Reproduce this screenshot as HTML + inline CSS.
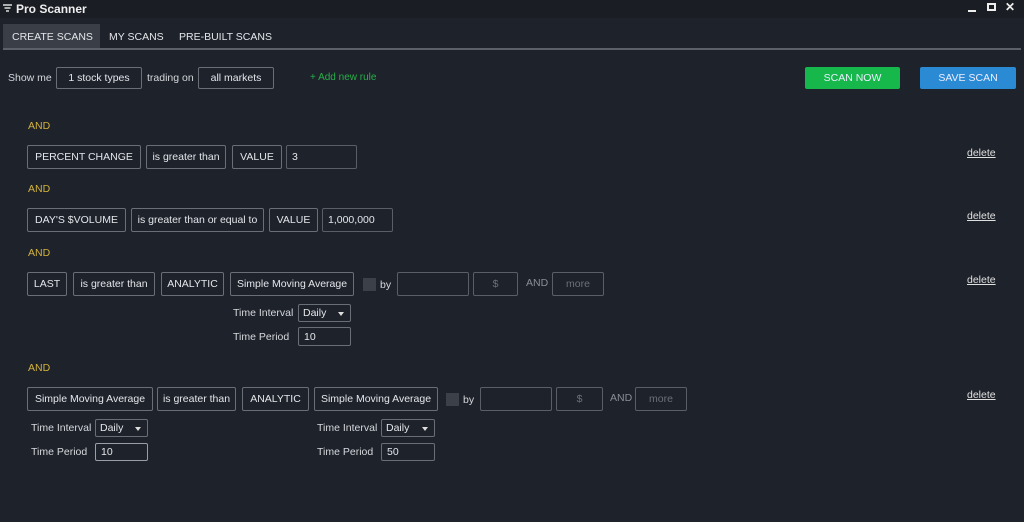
<!DOCTYPE html>
<html><head><style>
*{margin:0;padding:0;box-sizing:border-box}
body{width:1024px;height:522px;background:#1e222b;font-family:"Liberation Sans",sans-serif;font-size:10.5px;color:#d6d8dc;position:relative;overflow:hidden}
.a{position:absolute;white-space:nowrap}
.b{position:absolute;border:1px solid #6a6e76;border-radius:2px;display:flex;align-items:center;justify-content:center;color:#e4e6ea;font-size:10.5px;white-space:nowrap}
.i{position:absolute;border:1px solid #5a5e66;border-radius:2px;display:flex;align-items:center;padding-left:5px;color:#e4e6ea}
.g{color:#6c7078;justify-content:center;padding:0}
.and{position:absolute;color:#d4b23c;font-size:10.5px}
.del{position:absolute;left:967px;text-decoration:underline;color:#e0e0e0}
.sel{position:absolute;border:1px solid #6a6e76;border-radius:2px;padding-left:4px;display:flex;align-items:center;color:#e4e6ea}
.sel:after{content:"";position:absolute;right:6px;top:7px;border:3px solid transparent;border-top:4px solid #ddd}
.cb{position:absolute;width:13px;height:13px;background:#3c4049}
</style></head><body>
<div class="a" style="left:0;top:0;width:1024px;height:18px;background:#1a1d24"></div>
<svg class="a" style="left:3px;top:4px" width="9" height="9"><path d="M0 1h9M1.5 4h6M3 7h3" stroke="#ddd" stroke-width="1.6"/></svg>
<div class="a" style="left:16px;top:2px;font-weight:bold;font-size:12px;color:#eee">Pro Scanner</div>
<div class="a" style="left:968px;top:10px;width:8px;height:2px;background:#eee"></div>
<div class="a" style="left:987px;top:3px;width:9px;height:8px;border:2px solid #eee"></div>
<div class="a" style="left:1005px;top:0px;font-size:12px;font-weight:bold;color:#eee">✕</div>
<div class="a" style="left:3px;top:24px;width:97px;height:24px;background:#3a3e46"></div>
<div class="a" style="left:12px;top:31px;color:#e4e6ea">CREATE SCANS</div>
<div class="a" style="left:109px;top:31px;color:#e4e6ea">MY SCANS</div>
<div class="a" style="left:179px;top:31px;color:#e4e6ea">PRE-BUILT SCANS</div>
<div class="a" style="left:3px;top:48px;width:1018px;height:2px;background:#5c6068"></div>
<div class="a" style="left:8px;top:72px">Show me</div>
<div class="b" style="left:56px;top:67px;width:86px;height:22px">1 stock types</div>
<div class="a" style="left:147px;top:72px">trading on</div>
<div class="b" style="left:198px;top:67px;width:76px;height:22px">all markets</div>
<div class="a" style="left:310px;top:72px;color:#27b048;font-size:10px">+ Add new rule</div>
<div class="b" style="left:805px;top:67px;width:95px;height:22px;background:#16b84c;border:none;color:#eef">SCAN NOW</div>
<div class="b" style="left:920px;top:67px;width:96px;height:22px;background:#2a8ad4;border:none;color:#eef">SAVE SCAN</div>

<div class="and" style="left:28px;top:120px">AND</div>
<div class="b" style="left:27px;top:145px;width:114px;height:24px">PERCENT CHANGE</div>
<div class="b" style="left:146px;top:145px;width:80px;height:24px">is greater than</div>
<div class="b" style="left:232px;top:145px;width:50px;height:24px">VALUE</div>
<div class="i" style="left:286px;top:145px;width:71px;height:24px;align-items:flex-start;padding-top:5px">3</div>
<div class="del" style="top:147px">delete</div>

<div class="and" style="left:28px;top:183px">AND</div>
<div class="b" style="left:27px;top:208px;width:99px;height:24px">DAY'S $VOLUME</div>
<div class="b" style="left:131px;top:208px;width:133px;height:24px">is greater than or equal to</div>
<div class="b" style="left:269px;top:208px;width:49px;height:24px">VALUE</div>
<div class="i" style="left:322px;top:208px;width:71px;height:24px">1,000,000</div>
<div class="del" style="top:210px">delete</div>

<div class="and" style="left:28px;top:247px">AND</div>
<div class="b" style="left:27px;top:272px;width:40px;height:24px">LAST</div>
<div class="b" style="left:73px;top:272px;width:82px;height:24px">is greater than</div>
<div class="b" style="left:161px;top:272px;width:63px;height:24px">ANALYTIC</div>
<div class="b" style="left:230px;top:272px;width:124px;height:24px">Simple Moving Average</div>
<div class="cb" style="left:363px;top:278px"></div>
<div class="a" style="left:380px;top:279px">by</div>
<div class="i" style="left:397px;top:272px;width:72px;height:24px"></div>
<div class="i g" style="left:473px;top:272px;width:45px;height:24px">$</div>
<div class="a" style="left:526px;top:277px;color:#8a8e96">AND</div>
<div class="i g" style="left:552px;top:272px;width:52px;height:24px">more</div>
<div class="del" style="top:274px">delete</div>
<div class="a" style="left:233px;top:307px">Time Interval</div>
<div class="sel" style="left:298px;top:304px;width:53px;height:18px">Daily</div>
<div class="a" style="left:233px;top:331px">Time Period</div>
<div class="i" style="left:298px;top:327px;width:53px;height:19px;border-color:#6a6e76">10</div>

<div class="and" style="left:28px;top:362px">AND</div>
<div class="b" style="left:27px;top:387px;width:126px;height:24px">Simple Moving Average</div>
<div class="b" style="left:157px;top:387px;width:79px;height:24px">is greater than</div>
<div class="b" style="left:242px;top:387px;width:67px;height:24px">ANALYTIC</div>
<div class="b" style="left:314px;top:387px;width:124px;height:24px">Simple Moving Average</div>
<div class="cb" style="left:446px;top:393px"></div>
<div class="a" style="left:463px;top:394px">by</div>
<div class="i" style="left:480px;top:387px;width:72px;height:24px"></div>
<div class="i g" style="left:556px;top:387px;width:47px;height:24px">$</div>
<div class="a" style="left:610px;top:392px;color:#8a8e96">AND</div>
<div class="i g" style="left:635px;top:387px;width:52px;height:24px">more</div>
<div class="del" style="top:389px">delete</div>
<div class="a" style="left:31px;top:422px">Time Interval</div>
<div class="sel" style="left:95px;top:419px;width:53px;height:18px">Daily</div>
<div class="a" style="left:31px;top:446px">Time Period</div>
<div class="i" style="left:95px;top:443px;width:53px;height:18px;border-color:#9a9ea6">10</div>
<div class="a" style="left:317px;top:422px">Time Interval</div>
<div class="sel" style="left:381px;top:419px;width:54px;height:18px">Daily</div>
<div class="a" style="left:317px;top:446px">Time Period</div>
<div class="i" style="left:381px;top:443px;width:54px;height:18px;border-color:#6a6e76">50</div>
</body></html>
